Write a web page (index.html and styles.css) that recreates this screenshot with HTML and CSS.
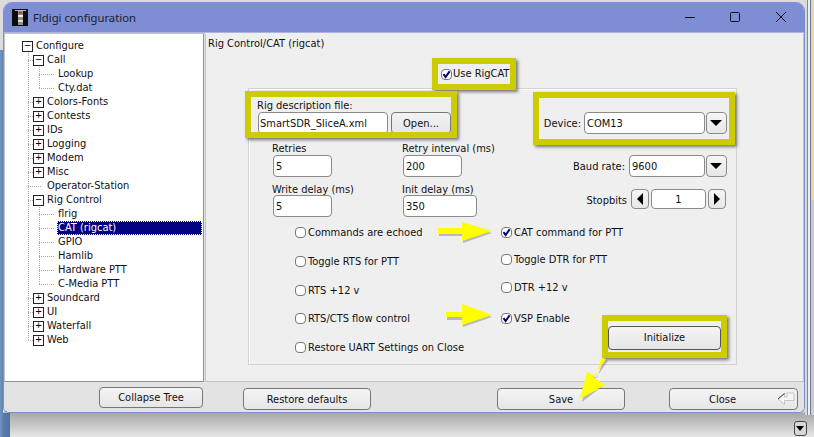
FILE: index.html
```html
<!DOCTYPE html>
<html lang="en">
<head>
<meta charset="utf-8">
<title>Fldigi configuration</title>
<link rel="stylesheet" href="styles.css">
</head>
<body>
<div class="window">
  <header class="titlebar">
    <svg class="appicon" width="21" height="17" viewBox="0 0 21 17"><rect width="16" height="17" fill="#0c0c0c"/><rect x="6" y="2" width="5" height="14" fill="#8f8f8f"/><rect x="6" y="6" width="5" height="2" fill="#eee"/><rect x="6" y="11" width="5" height="2" fill="#ddd"/><rect x="3" y="1" width="11" height="1" fill="#bbb"/><rect x="7" y="3" width="3" height="2" fill="#d33"/></svg>
    <span class="wintitle">Fldigi configuration</span>
    <span class="wincontrols">
      <svg width="12" height="12" viewBox="0 0 12 12"><path d="M1 6.5h10" stroke="#111" fill="none"/></svg>
      <svg width="12" height="12" viewBox="0 0 12 12"><rect x="1.5" y="1.5" width="9" height="9" rx="1" stroke="#111" fill="none"/></svg>
      <svg width="12" height="12" viewBox="0 0 12 12"><path d="M1 1l10 10M11 1L1 11" stroke="#111" fill="none"/></svg>
    </span>
  </header>
  <div class="client">
    <nav class="tree">
      <div class="node d0"><i class="box">−</i>Configure</div>
      <div class="node d1"><i class="box">−</i>Call</div>
      <div class="node d2">Lookup</div>
      <div class="node d2 last">Cty.dat</div>
      <div class="node d1"><i class="box">+</i>Colors-Fonts</div>
      <div class="node d1"><i class="box">+</i>Contests</div>
      <div class="node d1"><i class="box">+</i>IDs</div>
      <div class="node d1"><i class="box">+</i>Logging</div>
      <div class="node d1"><i class="box">+</i>Modem</div>
      <div class="node d1"><i class="box">+</i>Misc</div>
      <div class="node d1 leaf">Operator-Station</div>
      <div class="node d1"><i class="box">−</i>Rig Control</div>
      <div class="node d2">flrig</div>
      <div class="node d2"><span class="selected">CAT (rigcat)</span></div>
      <div class="node d2">GPIO</div>
      <div class="node d2">Hamlib</div>
      <div class="node d2">Hardware PTT</div>
      <div class="node d2 last">C-Media PTT</div>
      <div class="node d1"><i class="box">+</i>Soundcard</div>
      <div class="node d1"><i class="box">+</i>UI</div>
      <div class="node d1"><i class="box">+</i>Waterfall</div>
      <div class="node d1 end"><i class="box">+</i>Web</div>
    </nav>
    <main class="panel">
      <div class="paneltitle">Rig Control/CAT (rigcat)</div>
      <div class="userow"><span class="check"><svg viewBox="0 0 9 9"><path d="M1.5 4.2L3.6 7L7.6 1.4"/></svg></span>Use RigCAT</div>
      <section class="group">
        <div class="row-file">
          <div class="filecol">
            <div class="label">Rig description file:</div>
            <div class="fileline">
              <span class="field wfile">SmartSDR_SliceA.xml</span>
              <span class="btn wopen">Open...</span>
            </div>
          </div>
          <div class="devcol">
            <span class="sidelabel">Device:</span>
            <span class="field wdev">COM13</span>
            <span class="drop"></span>
          </div>
        </div>
        <div class="row-params">
          <div class="param p1">
            <div class="label">Retries</div>
            <span class="field wnum">5</span>
          </div>
          <div class="param p2">
            <div class="label">Retry interval (ms)</div>
            <span class="field wnum">200</span>
          </div>
          <div class="baud">
            <span class="sidelabel">Baud rate:</span>
            <span class="field wbaud">9600</span>
            <span class="drop"></span>
          </div>
        </div>
        <div class="row-params second">
          <div class="param p1">
            <div class="label">Write delay (ms)</div>
            <span class="field wnum">5</span>
          </div>
          <div class="param p2">
            <div class="label">Init delay (ms)</div>
            <span class="field wnum2">350</span>
          </div>
          <div class="stop">
            <span class="sidelabel">Stopbits</span>
            <span class="spin"><i class="tri left"></i></span>
            <span class="spinval">1</span>
            <span class="spin"><i class="tri right"></i></span>
          </div>
        </div>
        <div class="checks">
          <div class="chk"><span class="check"></span>Commands are echoed</div>
          <div class="chk"><span class="check"><svg viewBox="0 0 9 9"><path d="M1.5 4.2L3.6 7L7.6 1.4"/></svg></span>CAT command for PTT</div>
          <div class="chk"><span class="check"></span>Toggle RTS for PTT</div>
          <div class="chk up2"><span class="check"></span>Toggle DTR for PTT</div>
          <div class="chk"><span class="check"></span>RTS +12 v</div>
          <div class="chk up3"><span class="check"></span>DTR +12 v</div>
          <div class="chk c-rts"><span class="check"></span>RTS/CTS flow control</div>
          <div class="chk c-vsp"><span class="check"><svg viewBox="0 0 9 9"><path d="M1.5 4.2L3.6 7L7.6 1.4"/></svg></span>VSP Enable</div>
          <div class="chk c-uart"><span class="check"></span>Restore UART Settings on Close</div>
          <span class="btn init">Initialize</span>
        </div>
      </section>
    </main>
    <div class="footer">
      <span class="btn collapse">Collapse Tree</span>
      <span class="btn restore">Restore defaults</span>
      <span class="btn save">Save</span>
      <span class="btn close">Close
        <svg class="ret" width="18" height="14" viewBox="0 0 18 14"><path d="M1 7L7.5 1.5V5H10V1H17V8.5H7.5V12.5Z" fill="#f6f6f6" stroke="#c4c4c4"/><path d="M1 7L7.5 1.5" stroke="#333" fill="none"/></svg>
      </span>
    </div>
  </div>
</div>
<div class="mark m-use"></div>
<div class="mark m-file"></div>
<div class="mark m-dev"></div>
<div class="mark m-init"></div>
<svg class="arrows" width="814" height="437" viewBox="0 0 814 437">
  <g class="shadow">
    <path d="M439 231H463V225L492 233L463 243V236H439Z"/>
    <path d="M447 315H463V307L492 317L463 327V320H447Z"/>
    <path d="M608 361L595 379L603 386L582 402L589 374L597 378L604 358Z"/>
  </g>
  <g class="arrow">
    <path d="M438 228H462V222L492 231L462 241V234H438Z"/>
    <path d="M446 312H462V304L492 315L462 325V317H446Z"/>
    <path d="M606 359L593 377L605 385L580 399L587 372L596 376L601 358Z"/>
  </g>
</svg>
<span class="scrolldown"></span>
</body>
</html>
```
FILE: styles.css
```css
* { box-sizing: border-box; }
html, body { margin: 0; height: 437px; overflow: hidden; }
body {
  position: relative;
  padding: 2px 0 0 3px;
  background:
    linear-gradient(#e8d9a0, #e8d9a0) right 0 top 0 / 3px 200px no-repeat,
    linear-gradient(90deg, #d8d8d8 0 2px, #888 2px 3px, #efefef 3px 5px, #6a7a9a 5px 6px, #ccc 6px) right 0 top 0 / 9px 415px no-repeat,
    linear-gradient(90deg, #7396c4, #5d80ac) 0 50px / 3px 387px no-repeat,
    linear-gradient(90deg, #5d80ac, #4f73a0) 0 413px / 10px 24px no-repeat,
    linear-gradient(#dcdcdc 412px, #a8a8a8 413px, #c4c4c4 424px, #e6e6e6 437px);
  font: 11px/14px "DejaVu Sans Condensed", "Liberation Sans", sans-serif;
  color: #111;
}
.window {
  width: 802px;
  height: 411px;
  background: #e3e3e3;
  border: 1px solid #7e8ed4;
  border-top: 0;
  border-radius: 9px 9px 6px 6px;
  overflow: hidden;
}
.titlebar {
  height: 31px;
  background: #7e8ed4;
  display: flex;
  align-items: center;
  padding: 0 17px 0 8px;
  border-bottom: 1px solid #a9b4e2;
}
.appicon { display: block; }
.wintitle { font: 11.3px "Noto Sans", sans-serif; color: #1a2030; }
.wincontrols { margin-left: auto; display: flex; gap: 33px; }
.wincontrols svg { display: block; }
.wincontrols svg:last-child { margin-left: 1px; }
.client {
  height: 379px;
  display: grid;
  grid-template-columns: 200px 1fr;
  grid-template-rows: 349px 1fr;
  column-gap: 1px;
  background: #e3e3e3;
}
.tree {
  background: #fff;
  border: 1px solid #8f8f8f;
  border-top-color: #c4c4c4;
  border-left-color: #c4c4c4;
  padding: 5px 0 0 0;
}
.node {
  height: 14px;
  line-height: 14px;
  white-space: nowrap;
  display: flex;
  align-items: center;
  position: relative;
}
.d0 { padding-left: 17px; }
.d1 { padding-left: 28px; }
.d2 { padding-left: 53px; }
.d1.leaf { padding-left: 42px; }
.d1::before, .d2::before {
  content: "";
  position: absolute;
  inset: 0;
  background:
    repeating-linear-gradient(#aaa 0 1px, transparent 1px 2px) 23px 0 / 1px 14px no-repeat,
    repeating-linear-gradient(90deg, #aaa 0 1px, transparent 1px 2px) 23px 7px / 5px 1px no-repeat;
}
.d1.leaf::before {
  background:
    repeating-linear-gradient(#aaa 0 1px, transparent 1px 2px) 23px 0 / 1px 14px no-repeat,
    repeating-linear-gradient(90deg, #aaa 0 1px, transparent 1px 2px) 23px 7px / 14px 1px no-repeat;
}
.d1.end::before {
  background:
    repeating-linear-gradient(#aaa 0 1px, transparent 1px 2px) 23px 0 / 1px 8px no-repeat,
    repeating-linear-gradient(90deg, #aaa 0 1px, transparent 1px 2px) 23px 7px / 5px 1px no-repeat;
}
.d2::before {
  background:
    repeating-linear-gradient(#aaa 0 1px, transparent 1px 2px) 23px 0 / 1px 14px no-repeat,
    repeating-linear-gradient(#aaa 0 1px, transparent 1px 2px) 34px 0 / 1px 14px no-repeat,
    repeating-linear-gradient(90deg, #aaa 0 1px, transparent 1px 2px) 34px 7px / 15px 1px no-repeat;
}
.d2.last::before {
  background:
    repeating-linear-gradient(#aaa 0 1px, transparent 1px 2px) 23px 0 / 1px 14px no-repeat,
    repeating-linear-gradient(#aaa 0 1px, transparent 1px 2px) 34px 0 / 1px 8px no-repeat,
    repeating-linear-gradient(90deg, #aaa 0 1px, transparent 1px 2px) 34px 7px / 15px 1px no-repeat;
}
.box {
  width: 11px;
  height: 11px;
  border: 1px solid #222;
  font: 11px/8px "Liberation Mono", monospace;
  text-align: center;
  margin-right: 3px;
  color: #000;
  background: #fff;
  flex: none;
  position: relative;
  z-index: 1;
}
.selected {
  background: #000080;
  color: #fff;
  width: 145px;
  outline: 1px dotted #fff;
  outline-offset: -1px;
  padding-left: 1px;
  margin-left: -1px;
  position: relative;
  z-index: 1;
}
.panel {
  background: #efefef;
  border: 1px solid #c4c4c4;
  border-top-color: #efefef;
  padding: 3px 0 0 2px;
}
.paneltitle { height: 14px; }
.userow {
  margin-top: 15px;
  margin-left: 233px;
  height: 16px;
  display: flex;
  align-items: center;
}
.group {
  margin: 6px 0 0 40px;
  width: 489px;
  height: 277px;
  border: 1px solid #d2d2d2;
  box-shadow: inset 1px 1px #fff;
  padding: 9px 0 0 8px;
}
.row-file { display: flex; height: 36px; }
.filecol { width: 286px; }
.label { height: 14px; line-height: 16px; }
.second .label { padding-top: 1px; }
.fileline { display: flex; gap: 3px; }
.field {
  height: 22px;
  background: #fff;
  border: 1px solid #8a8a8a;
  border-radius: 4px;
  padding: 0 2px;
  line-height: 22px;
  display: inline-block;
  flex: none;
}
.wfile { width: 130px; margin-left: 1px; padding-left: 1px; }
.btn {
  height: 22px;
  background: linear-gradient(#f4f4f4, #e6e6e6);
  border: 1px solid #777;
  border-radius: 4px;
  line-height: 21px;
  text-align: center;
  display: inline-block;
  flex: none;
}
.wopen { width: 60px; }
.devcol { display: flex; align-items: center; justify-content: flex-end; width: 184px; margin-top: 14px; }
.sidelabel { margin-right: 3px; padding-top: 2px; }
.wdev { width: 121px; }
.drop {
  width: 21px;
  height: 22px;
  margin-left: 1px;
  border: 1px solid #8a8a8a;
  border-radius: 4px;
  background: linear-gradient(#f6f6f6, #e6e6e6);
  position: relative;
  flex: none;
}
.drop::after {
  content: "";
  position: absolute;
  left: 3px;
  top: 7px;
  border: 6px solid transparent;
  border-top: 6px solid #000;
  border-bottom: 0;
}
.row-params {
  display: flex;
  margin-top: 7px;
  height: 36px;
  padding-left: 15px;
}
.row-params.second { margin-top: 4px; }
.param { flex: none; }
.param .field { margin-left: 1px; }
.p1 { width: 130px; }
.p2 { width: 120px; }
.wnum { width: 59px; }
.wnum2 { width: 74px; }
.baud { display: flex; align-items: center; justify-content: flex-end; margin-top: 14px; width: 205px; }
.baud .sidelabel { margin-right: 4px; }
.wbaud { width: 76px; }
.stop { display: flex; align-items: center; justify-content: flex-end; align-self: flex-start; width: 204px; gap: 2px; height: 20px; margin-top: 8px; }
.stop .sidelabel { margin-right: 2px; padding-top: 3px; }
.spin {
  width: 18px;
  height: 20px;
  border: 1px solid #8a8a8a;
  border-radius: 4px;
  background: linear-gradient(#f6f6f6, #e6e6e6);
  display: flex;
  align-items: center;
  justify-content: center;
}
.tri { border: 6px solid transparent; display: block; }
.tri.left { border-left: 0; border-right: 6px solid #000; }
.tri.right { border-right: 0; border-left: 6px solid #000; }
.spinval {
  width: 55px;
  height: 20px;
  background: #fff;
  border: 1px solid #8a8a8a;
  border-radius: 4px;
  text-align: center;
  line-height: 20px;
}
.checks {
  margin-top: 8px;
  margin-left: 38px;
  display: grid;
  grid-template-columns: 206px 1fr;
  grid-template-rows: 29px 29px 28px 29px 29px;
}
.chk { display: flex; align-items: flex-start; height: 14px; line-height: 16px; }
.c-rts { grid-area: 4 / 1; }
.c-vsp { grid-area: 4 / 2; }
.c-uart { grid-area: 5 / 1; }
.up2 { margin-top: -2px; }
.up3 { margin-top: -3px; }
.check {
  width: 11px;
  height: 11px;
  border: 1px solid #777;
  border-radius: 4px;
  background: #fff;
  margin-right: 2px;
  flex: none;
}
.chk .check { margin-top: 2px; }
.check svg { display: block; width: 9px; height: 9px; }
.check path { fill: none; stroke: #000080; stroke-width: 2; }
.userow .check { margin-right: 1px; }
.init {
  grid-column: 2;
  grid-row: 4 / 6;
  margin: 15px 0 0 107px;
  width: 113px;
  height: 24px;
  line-height: 22px;
  border-color: #555;
}
.footer {
  grid-column: 1 / 3;
  display: flex;
  align-items: flex-start;
  padding-top: 5px;
  padding-left: 95px;
}
.collapse { width: 104px; height: 21px; line-height: 19px; }
.restore, .save, .close { margin-top: 1px; }
.restore { width: 128px; margin-left: 40px; }
.save { width: 128px; margin-left: 126px; }
.close { width: 129px; margin-left: 44px; position: relative; padding-right: 22px; }
.ret { position: absolute; right: 2px; top: 3px; }
.mark {
  position: absolute;
  border: 6px solid #cccc00;
  box-shadow: 2px 2px 3px #777;
}
.m-use { left: 432px; top: 58px; width: 84px; height: 32px; }
.m-file { left: 245px; top: 91px; width: 212px; height: 47px; }
.m-dev { left: 533px; top: 92px; width: 202px; height: 53px; }
.m-init { left: 602px; top: 315px; width: 125px; height: 43px; }
.arrows { position: absolute; left: 0; top: 0; pointer-events: none; }
.arrow path { fill: #ffff00; }
.shadow path { fill: #555; opacity: .35; }
.scrolldown {
  position: absolute;
  left: 794px;
  top: 421px;
  width: 13px;
  height: 15px;
  border: 1px solid #444;
  border-radius: 3px;
  background: #d8d8d8;
}
.scrolldown::after {
  content: "";
  position: absolute;
  left: 1px;
  top: 4px;
  border: 4.5px solid transparent;
  border-top: 5px solid #000;
  border-bottom: 0;
}
```
